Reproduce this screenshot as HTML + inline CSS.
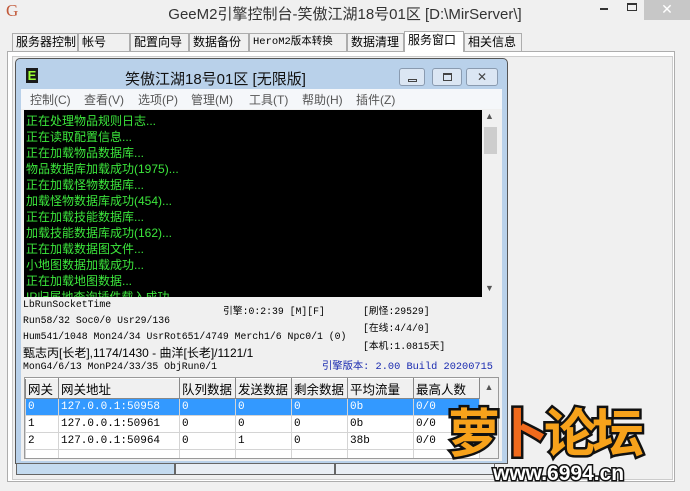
<!DOCTYPE html>
<html><head><meta charset="utf-8"><style>
*{margin:0;padding:0;box-sizing:border-box}
body{width:690px;height:491px;background:#f0f0f0;position:relative;overflow:hidden;font-family:"Liberation Sans","Noto Sans CJK SC",sans-serif;font-size:12px;color:#000}
.a{position:absolute;white-space:nowrap}
.tab{position:absolute;top:33px;height:18px;border:1px solid #adadad;border-bottom:none;background:#f0f0f0;font-size:12px;line-height:17px;padding-left:3px}
.mono{font-family:"Liberation Mono","Noto Sans CJK SC",monospace;font-size:9.8px}
.log div{height:16px;line-height:16px}
table{border-collapse:collapse}
td{border:1px solid #d4d4d4;height:17px;padding:0 2px;font-family:"Liberation Mono",monospace;font-size:11px}
th{border:1px solid #888;border-top:1px solid #fff;height:17px;font-weight:normal;text-align:left;padding:0 2px;background:#f0f0f0;font-size:12.5px}
</style></head><body>
<div class="a" style="left:6px;top:1px;font-family:'Liberation Serif',serif;font-size:17px;color:#c25a3a">G</div>
<div class="a" style="left:0;width:690px;top:3px;text-align:center;font-size:15px;color:#333">GeeM2引擎控制台-笑傲江湖18号01区 [D:\MirServer\]</div>
<div class="a" style="left:600px;top:8px;width:8px;height:2px;background:#333"></div>
<div class="a" style="left:627px;top:3px;width:10px;height:8px;border:1px solid #333;border-top-width:2px"></div>
<div class="a" style="left:644px;top:0;width:46px;height:20px;background:#c7c7c7;color:#fff;text-align:center;font-size:14px;line-height:18px">✕</div>

<div class="tab" style="left:12px;width:66px">服务器控制</div>
<div class="tab" style="left:78px;width:52px">帐号</div>
<div class="tab" style="left:130px;width:59px">配置向导</div>
<div class="tab" style="left:189px;width:60px">数据备份</div>
<div class="tab" style="left:249px;width:98px;font-family:'Liberation Mono','Noto Sans CJK SC',monospace;font-size:10.5px">HeroM2版本转换</div>
<div class="tab" style="left:347px;width:57px">数据清理</div>
<div class="tab" style="left:404px;top:31px;height:21px;width:60px;background:#fff;z-index:2">服务窗口</div>
<div class="tab" style="left:464px;width:58px">相关信息</div>
<div class="a" style="left:7px;top:51px;width:668px;height:431px;border:1px solid #adadad;background:#fff"></div>
<div class="a" style="left:12px;top:56px;width:661px;height:424px;background:#f0f0f0;border:1px solid #ccc"></div>

<div class="a" style="left:15px;top:58px;width:493px;height:406px;background:#b9d1ea;border:1px solid #555;border-radius:5px 5px 0 0"></div>
<div class="a" style="left:26px;top:68px;width:12px;height:15px;background:#1a1a1a;color:#9f3;font-weight:bold;font-size:13px;line-height:15px;text-align:center">E</div>
<div class="a" style="left:125px;top:68px;font-size:15px;color:#111">笑傲江湖18号01区 [无限版]</div>
<div class="a" style="left:399px;top:68px;width:26px;height:18px;border:1px solid #8a9bb0;border-radius:3px;background:#dbe6f3"><div class="a" style="left:8px;top:10px;width:9px;height:3px;border:1px solid #444"></div></div>
<div class="a" style="left:432px;top:68px;width:30px;height:18px;border:1px solid #8a9bb0;border-radius:3px;background:#dbe6f3"><div class="a" style="left:10px;top:4px;width:9px;height:8px;border:1px solid #444;border-top-width:2px"></div></div>
<div class="a" style="left:466px;top:68px;width:32px;height:18px;border:1px solid #8a9bb0;border-radius:3px;background:#dbe6f3;text-align:center;color:#444;font-size:12px;line-height:16px">✕</div>
<div class="a" style="left:21px;top:89px;width:481px;height:20px;background:#f5f7fa"></div>
<div class="a" style="left:30px;top:91px;color:#555">控制(C)</div>
<div class="a" style="left:84px;top:91px;color:#555">查看(V)</div>
<div class="a" style="left:138px;top:91px;color:#555">选项(P)</div>
<div class="a" style="left:191px;top:91px;color:#555">管理(M)</div>
<div class="a" style="left:249px;top:91px;color:#555">工具(T)</div>
<div class="a" style="left:302px;top:91px;color:#555">帮助(H)</div>
<div class="a" style="left:356px;top:91px;color:#555">插件(Z)</div>

<div class="a" style="left:21px;top:109px;width:481px;height:352px;background:#f0f0f0"></div>
<div class="a log" style="left:24px;top:110px;width:458px;height:187px;background:#000;color:#3ce63c;padding-left:2px;overflow:hidden;font-size:12px">
<div style="margin-top:3px">正在处理物品规则日志...</div><div>正在读取配置信息...</div><div>正在加载物品数据库...</div><div>物品数据库加载成功(1975)...</div><div>正在加载怪物数据库...</div><div>加载怪物数据库成功(454)...</div><div>正在加载技能数据库...</div><div>加载技能数据库成功(162)...</div><div>正在加载数据图文件...</div><div>小地图数据加载成功...</div><div>正在加载地图数据...</div><div>IP归属地查询插件载入成功</div></div>
<div class="a" style="left:482px;top:110px;width:17px;height:187px;background:#f0f0f0"></div>
<div class="a" style="left:484px;top:127px;width:13px;height:27px;background:#cdcdcd"></div>
<div class="a" style="left:485px;top:111px;color:#555;font-size:9px">▲</div>
<div class="a" style="left:485px;top:283px;color:#555;font-size:9px">▼</div>

<div class="a mono" style="left:23px;top:299px">LbRunSocketTime</div>
<div class="a mono" style="left:23px;top:315px">Run58/32 Soc0/0 Usr29/136</div>
<div class="a mono" style="left:23px;top:331px">Hum541/1048 Mon24/34 UsrRot651/4749 Merch1/6 Npc0/1 (0)</div>
<div class="a" style="left:23px;top:344px;font-size:12px">甄志丙[长老],1174/1430 - 曲洋[长老]/1121/1</div>
<div class="a mono" style="left:23px;top:361px">MonG4/6/13 MonP24/33/35 ObjRun0/1</div>
<div class="a mono" style="left:223px;top:303px">引擎:0:2:39 [M][F]</div>
<div class="a mono" style="left:363px;top:303px">[刷怪:29529]</div>
<div class="a mono" style="left:363px;top:320px">[在线:4/4/0]</div>
<div class="a mono" style="left:363px;top:338px">[本机:1.0815天]</div>
<div class="a mono" style="left:322px;top:357px;color:#1a2bb0;font-size:10.3px">引擎版本: 2.00 Build 20200715</div>

<div class="a" style="left:24px;top:377px;width:475px;height:82px;background:#fff;border:1px solid #999;overflow:hidden">
<table style="width:455px">
<tr><th style="width:33px">网关</th><th style="width:121px">网关地址</th><th style="width:56px">队列数据</th><th style="width:56px">发送数据</th><th style="width:56px">剩余数据</th><th style="width:66px">平均流量</th><th>最高人数</th></tr>
<tr style="background:#3399ff;color:#fff"><td style="color:#fff">0</td><td style="color:#fff">127.0.0.1:50958</td><td style="color:#fff">0</td><td style="color:#fff">0</td><td style="color:#fff">0</td><td style="color:#fff">0b</td><td style="color:#fff">0/0</td></tr>
<tr><td>1</td><td>127.0.0.1:50961</td><td>0</td><td>0</td><td>0</td><td>0b</td><td>0/0</td></tr>
<tr><td>2</td><td>127.0.0.1:50964</td><td>0</td><td>1</td><td>0</td><td>38b</td><td>0/0</td></tr>
<tr><td></td><td></td><td></td><td></td><td></td><td></td><td></td></tr>
</table></div>
<div class="a" style="left:480px;top:378px;width:18px;height:80px;background:#f0f0f0;color:#555;font-size:9px;text-align:center;padding-top:4px">▲</div>

<div class="a" style="left:16px;top:463px;width:159px;height:12px;background:#c4dbf0;border:1px solid #666"></div>
<div class="a" style="left:175px;top:463px;width:160px;height:12px;background:#e9eef4;border:1px solid #666"></div>
<div class="a" style="left:335px;top:463px;width:160px;height:12px;background:#e9eef4;border:1px solid #666"></div>

<div class="a" style="left:448px;top:392px;font-size:52px;font-weight:bold;color:#f7a21b;-webkit-text-stroke:5px #111;paint-order:stroke fill;letter-spacing:-4px;font-family:'WenQuanYi Zen Hei','Noto Sans CJK SC',sans-serif">萝<span style="color:#f06a1c">卜</span>论坛</div>
<div class="a" style="left:493px;top:462px;font-size:21px;font-weight:bold;color:#fff;-webkit-text-stroke:3px #111;paint-order:stroke fill;font-family:'Liberation Sans',sans-serif">www.6994.cn</div>
</body></html>
